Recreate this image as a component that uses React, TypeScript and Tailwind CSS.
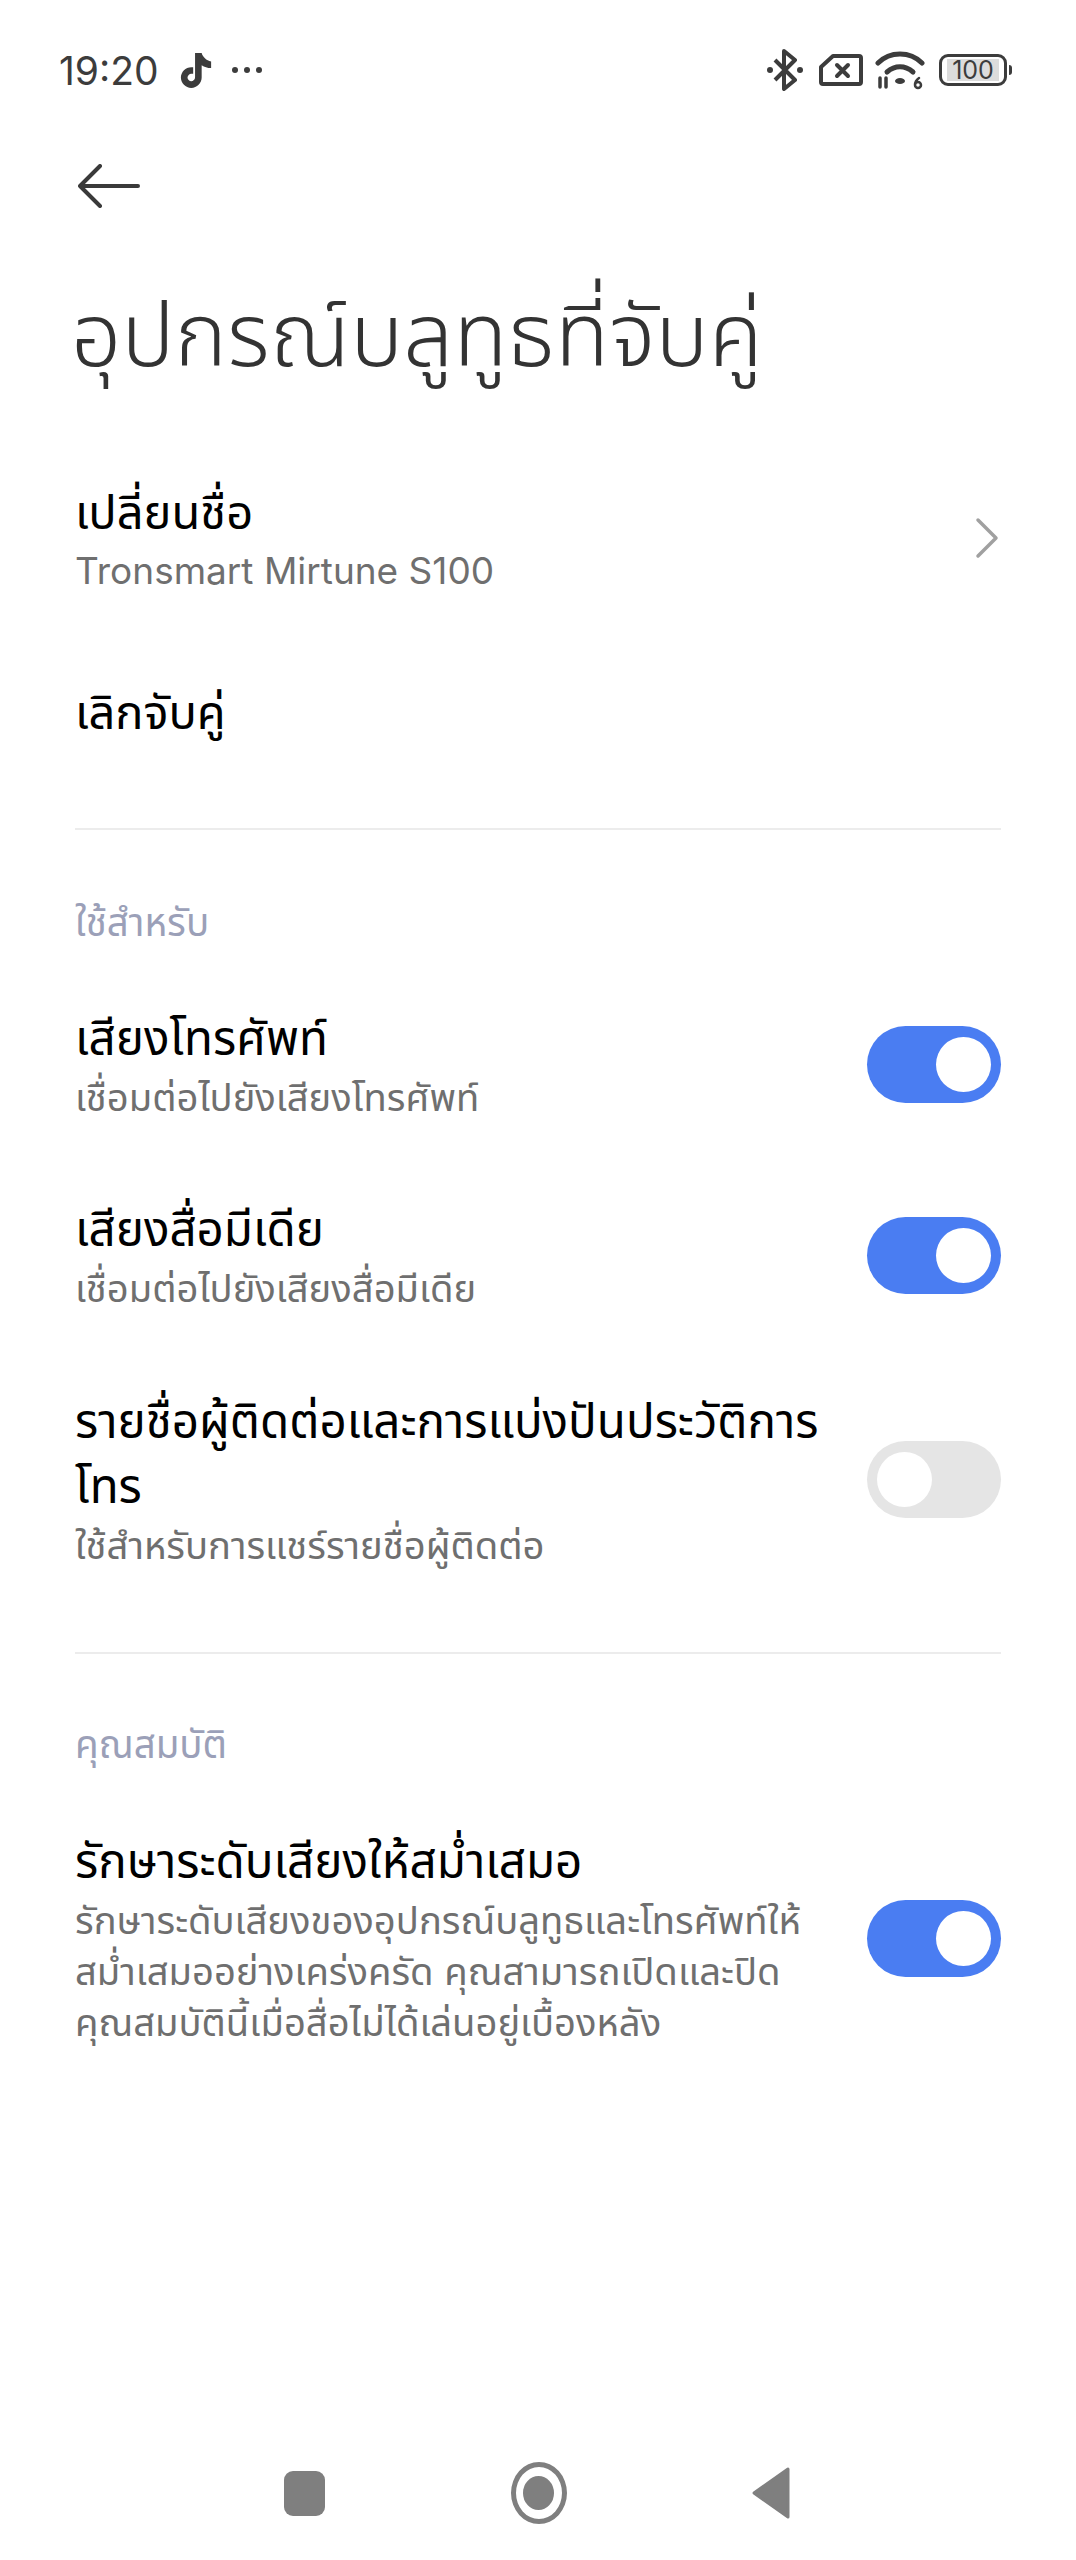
import React from 'react';

const FONT = "font-['Inter','Noto_Sans','Noto_Sans_Thai','Noto_Sans_CJK_SC',sans-serif]";

const Toggle = ({ on }: { on: boolean }) => (
  <div
    className={
      on
        ? 'flex h-[77px] w-[134px] shrink-0 items-center justify-end rounded-full bg-[#4a7df2] pr-[10px]'
        : 'flex h-[77px] w-[134px] shrink-0 items-center justify-start rounded-full bg-[#e5e5e5] pl-[10px]'
    }
  >
    <div className="h-[55px] w-[55px] rounded-full bg-white" />
  </div>
);

const Divider = () => <div className="mx-[75px] h-[2px] bg-[#ececec]" />;

const SectionLabel = ({ text }: { text: string }) => (
  <div className="px-[75px] text-[38.5px] leading-[48px] text-[#9ba0b8]">{text}</div>
);

type RowProps = { title: string; sub: string; on: boolean; className: string };

const SwitchRow = ({ title, sub, on, className }: RowProps) => (
  <div className={'flex items-center justify-between pl-[75px] pr-[75px] ' + className}>
    <div className="w-[760px]">
      <div className="text-[47.5px] leading-[65px] text-black">{title}</div>
      <div className="mt-[2px] text-[38.2px] leading-[51px] text-[#6f6f6f]">{sub}</div>
    </div>
    <Toggle on={on} />
  </div>
);

const StatusBar = () => (
  <div className="flex h-[70px] items-center justify-between pl-[59px] pr-[64px] pt-[4px] text-[#3c3c3c]">
    <div className="flex items-center">
      <span className="text-[39px] leading-none">19:20</span>
      <svg className="ml-[20px]" width="34" height="38" viewBox="0 0 36 38">
        <path
          fill="#3c3c3c"
          d="M17 1h7c1 4 5 8 10 9v7c-4 0-7-1-10-3v13c0 6-5 11-11 11S2 33 2 27s5-11 11-11h2v7h-2c-2 0-4 2-4 4s2 4 4 4 4-2 4-4z"
        />
      </svg>
      <div className="ml-[19px] flex gap-[6px]">
        <div className="h-[6px] w-[6px] rounded-full bg-[#3c3c3c]" />
        <div className="h-[6px] w-[6px] rounded-full bg-[#3c3c3c]" />
        <div className="h-[6px] w-[6px] rounded-full bg-[#3c3c3c]" />
      </div>
    </div>
    <div className="flex items-center">
      <svg width="38" height="42" viewBox="0 0 38 42" fill="none" stroke="#3c3c3c" strokeWidth="4" strokeLinejoin="round">
        <path d="M9 11l20 20-11 9V2l11 9L9 31" />
        <circle cx="4" cy="21" r="3" fill="#3c3c3c" stroke="none" />
        <circle cx="34" cy="21" r="3" fill="#3c3c3c" stroke="none" />
      </svg>
      <svg className="ml-[15px]" width="44" height="34" viewBox="0 0 44 34" fill="none" stroke="#3c3c3c" strokeWidth="4" strokeLinejoin="round">
        <path d="M14 3h26a2 2 0 0 1 2 2v24a2 2 0 0 1-2 2H4a2 2 0 0 1-2-2V14z" />
        <path d="M18 12l11 11M29 12L18 23" strokeLinecap="round" />
      </svg>
      <svg className="ml-[12px]" width="50" height="40" viewBox="0 0 50 40" fill="none" stroke="#3c3c3c" strokeWidth="5" strokeLinecap="round">
        <path d="M3 13C15 1 35 1 47 13" />
        <path d="M12 22c8-7 18-7 26 0" />
        <ellipse cx="25" cy="31" rx="5" ry="3" fill="#3c3c3c" stroke="none" />
        <path d="M5 28v9M11 28v9" strokeWidth="3.5" />
        <path d="M44 28c-3 2-4 5-4 7a3 3 0 0 0 6 0 3 3 0 0 0-6 0" strokeWidth="2.5" />
      </svg>
      <div className="relative ml-[14px] flex h-[32px] w-[68px] items-center justify-center rounded-[9px] border-[3px] border-[#3c3c3c]">
        <div className="flex h-[22px] w-[52px] items-center justify-center bg-[#dcdcdc] text-[25px] leading-none">100</div>
      </div>
      <div className="ml-[2px] h-[10px] w-[3px] rounded-r-sm bg-[#3c3c3c]" />
    </div>
  </div>
);

export default function App() {
  return (
    <div className={'flex h-[2560px] w-[1076px] flex-col overflow-hidden bg-white ' + FONT}>
      <div className="pt-[33px]">
        <StatusBar />
      </div>

      <div className="pl-[78px] pt-[61px]">
        <svg width="62" height="44" viewBox="0 0 62 44" fill="none" stroke="#3a3a3a" strokeWidth="4" strokeLinecap="round" strokeLinejoin="round">
          <path d="M60 22H2M22 2L2 22l20 20" />
        </svg>
      </div>

      <h1 className="mt-[76px] px-[71px] text-[88.5px] font-light leading-[100px] tracking-[0.2px] text-[#333]">อุปกรณ์บลูทูธที่จับคู่</h1>

      <div className="mt-[96px] flex items-center justify-between pl-[75px] pr-[77px]">
        <div>
          <div className="text-[47px] leading-[63px] text-black">เปลี่ยนชื่อ</div>
          <div className="mt-[2px] text-[37px] leading-[51px] text-[#6f6f6f]">Tronsmart Mirtune S100</div>
        </div>
        <svg width="24" height="42" viewBox="0 0 24 42" fill="none" stroke="#a0a0a0" strokeWidth="3.5" strokeLinecap="round" strokeLinejoin="round">
          <path d="M3 3l18 18L3 39" />
        </svg>
      </div>

      <div className="mt-[84px] px-[75px] text-[47px] leading-[63px] text-black">เลิกจับคู่</div>

      <div className="mt-[85px]">
        <Divider />
      </div>

      <div className="mt-[68px]">
        <SectionLabel text="ใช้สำหรับ" />
      </div>

      <SwitchRow className="mt-[59px]" title="เสียงโทรศัพท์" sub="เชื่อมต่อไปยังเสียงโทรศัพท์" on />
      <SwitchRow className="mt-[73px]" title="เสียงสื่อมีเดีย" sub="เชื่อมต่อไปยังเสียงสื่อมีเดีย" on />
      <SwitchRow className="mt-[74px]" title="รายชื่อผู้ติดต่อและการแบ่งปันประวัติการโทร" sub="ใช้สำหรับการแชร์รายชื่อผู้ติดต่อ" on={false} />

      <div className="mt-[81px]">
        <Divider />
      </div>

      <div className="mt-[66px]">
        <SectionLabel text="คุณสมบัติ" />
      </div>

      <div className="mt-[60px] flex items-center justify-between px-[75px]">
        <div className="w-[760px]">
          <div className="text-[47.5px] leading-[65px] text-black">รักษาระดับเสียงให้สม่ำเสมอ</div>
          <div className="mt-[2px] text-[38.2px] leading-[51px] text-[#6f6f6f]">
            รักษาระดับเสียงของอุปกรณ์บลูทูธและโทรศัพท์ให้สม่ำเสมออย่างเคร่งครัด คุณสามารถเปิดและปิดคุณสมบัตินี้เมื่อสื่อไม่ได้เล่นอยู่เบื้องหลัง
          </div>
        </div>
        <Toggle on />
      </div>

      <div className="mt-auto mb-[13px] flex h-[100px] items-center justify-between pb-[8px] pl-[284px] pr-[286px]">
        <div className="h-[45px] w-[41px] rounded-[9px] bg-[#7f7f7f]" />
        <div className="flex h-[62px] w-[56px] items-center justify-center rounded-[50%] border-[5px] border-[#7f7f7f]">
          <div className="h-[34px] w-[31px] rounded-[50%] bg-[#7f7f7f]" />
        </div>
        <svg width="38" height="52" viewBox="0 0 38 52">
          <path d="M36 2v48L2 26z" fill="#7f7f7f" stroke="#7f7f7f" strokeWidth="3" strokeLinejoin="round" />
        </svg>
      </div>
    </div>
  );
}
